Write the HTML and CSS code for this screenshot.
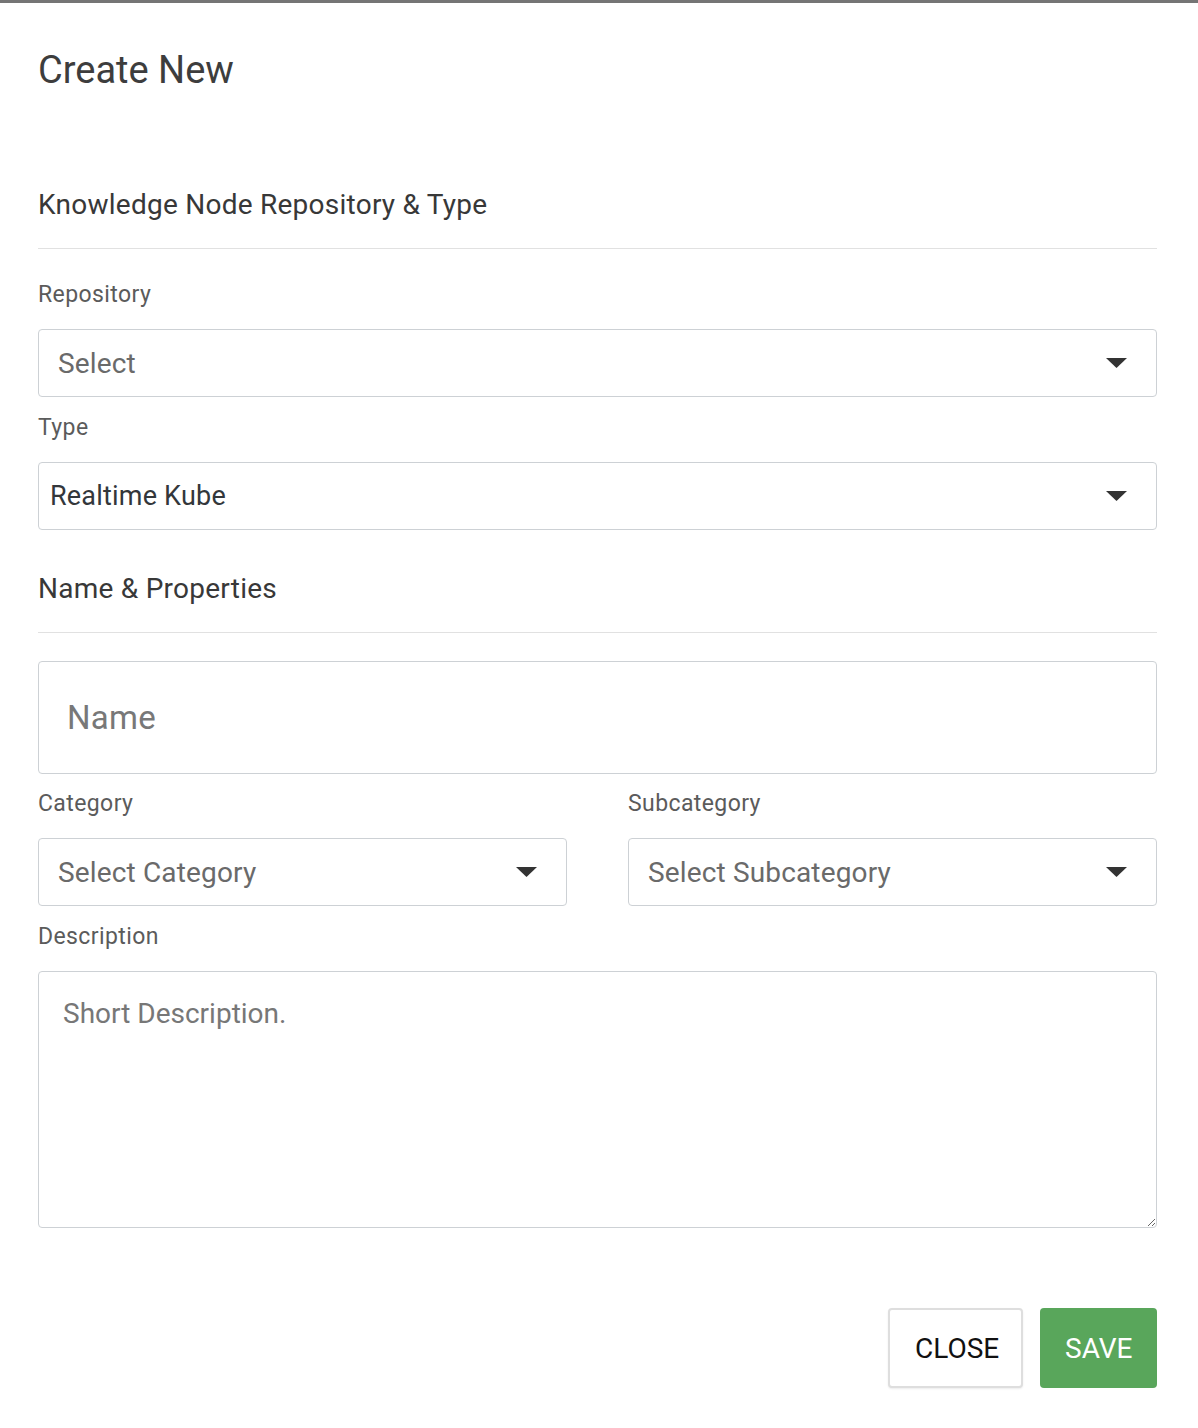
FILE: index.html
```html
<!DOCTYPE html>
<html lang="en">
<head>
<meta charset="utf-8">
<title>Create New</title>
<link rel="stylesheet" href="styles.css">
</head>
<body>
<div class="modal">
  <h1 class="title">Create New</h1>

  <h2 class="section-title">Knowledge Node Repository &amp; Type</h2>
  <div class="divider"></div>

  <div class="field first">
    <div class="label">Repository</div>
    <div class="select">
      <span class="placeholder">Select</span>
      <svg class="caret" width="21" height="10" viewBox="0 0 21 10"><path d="M0 0H21L10.5 10Z" fill="#333"/></svg>
    </div>
  </div>

  <div class="field">
    <div class="label">Type</div>
    <div class="select filled">
      <span class="value">Realtime Kube</span>
      <svg class="caret" width="21" height="10" viewBox="0 0 21 10"><path d="M0 0H21L10.5 10Z" fill="#333"/></svg>
    </div>
  </div>

  <h2 class="section-title second">Name &amp; Properties</h2>
  <div class="divider"></div>

  <input class="name-input" type="text" placeholder="Name">

  <div class="row">
    <div class="field">
      <div class="label">Category</div>
      <div class="select">
        <span class="placeholder">Select Category</span>
        <svg class="caret" width="21" height="10" viewBox="0 0 21 10"><path d="M0 0H21L10.5 10Z" fill="#333"/></svg>
      </div>
    </div>
    <div class="field">
      <div class="label">Subcategory</div>
      <div class="select">
        <span class="placeholder">Select Subcategory</span>
        <svg class="caret" width="21" height="10" viewBox="0 0 21 10"><path d="M0 0H21L10.5 10Z" fill="#333"/></svg>
      </div>
    </div>
  </div>

  <div class="field">
    <div class="label">Description</div>
    <textarea class="description" placeholder="Short Description."></textarea>
  </div>

  <div class="actions">
    <button class="btn btn-close" type="button">Close</button>
    <button class="btn btn-save" type="button">Save</button>
  </div>
</div>
</body>
</html>
```

FILE: styles.css
```css
* {
  box-sizing: border-box;
}

html, body {
  margin: 0;
  background: #fff;
}

body {
  font-family: Roboto, "Liberation Sans", sans-serif;
  color: #333;
}

.modal {
  border-top: 3px solid #757575;
  padding: 44px 41px 39px 38px;
}

.title {
  margin: 0;
  font-size: 38px;
  line-height: 46px;
  font-weight: 400;
  color: #3d3d3d;
}

.section-title {
  margin: 95px 0 0;
  font-size: 28px;
  line-height: 34px;
  font-weight: 400;
  letter-spacing: 0.25px;
  color: #383838;
}

.section-title.second {
  margin-top: 42px;
}

.divider {
  height: 1px;
  margin-top: 26px;
  background: #e1e1e1;
}

.field {
  margin-top: 18px;
}

.field.first {
  margin-top: 33px;
}

.label {
  font-size: 23px;
  line-height: 26px;
  letter-spacing: 0.4px;
  color: #5b5b5b;
  margin-bottom: 21px;
}

.select {
  height: 68px;
  display: flex;
  align-items: center;
  justify-content: space-between;
  padding: 0 29px 0 19px;
  border: 1px solid #cdd1d5;
  border-radius: 4px;
  background: #fff;
  font-size: 28px;
}

.select.filled {
  padding-left: 11px;
}

.placeholder {
  color: #6a6a6a;
  letter-spacing: 0.15px;
}

.value {
  color: #33373b;
  font-size: 27px;
  letter-spacing: 0.2px;
}

.caret {
  display: block;
  flex: none;
}

.name-input {
  display: block;
  width: 100%;
  height: 113px;
  margin: 28px 0 0;
  padding: 0 28px;
  border: 1px solid #cdd1d5;
  border-radius: 4px;
  font-family: Roboto, "Liberation Sans", sans-serif;
  font-size: 33px;
  letter-spacing: 0.3px;
  color: #333;
  outline: none;
}

.name-input::placeholder {
  color: #787878;
}

.row {
  display: grid;
  grid-template-columns: 1fr 1fr;
  column-gap: 61px;
  margin-top: -1px;
}

.description {
  display: block;
  width: 100%;
  height: 257px;
  margin: 0;
  padding: 21px 24px 18px;
  border: 1px solid #cdd1d5;
  border-radius: 4px;
  font-family: Roboto, "Liberation Sans", sans-serif;
  font-size: 28px;
  line-height: 42px;
  color: #333;
  outline: none;
  resize: both;
}

.description::placeholder {
  color: #777;
}

.actions {
  display: flex;
  justify-content: flex-end;
  gap: 17px;
  margin-top: 80px;
}

.btn {
  height: 80px;
  padding: 0 25px;
  border-radius: 4px;
  font-family: Roboto, "Liberation Sans", sans-serif;
  font-size: 28px;
  text-transform: uppercase;
  cursor: pointer;
}

.btn-close {
  width: 135px;
  background: #fff;
  color: #111;
  border: 2px solid #dedede;
  box-shadow: 0 1px 2px rgba(0, 0, 0, 0.08);
}

.btn-save {
  width: 117px;
  background: #59a65b;
  color: #fff;
  border: 0;
}
```
